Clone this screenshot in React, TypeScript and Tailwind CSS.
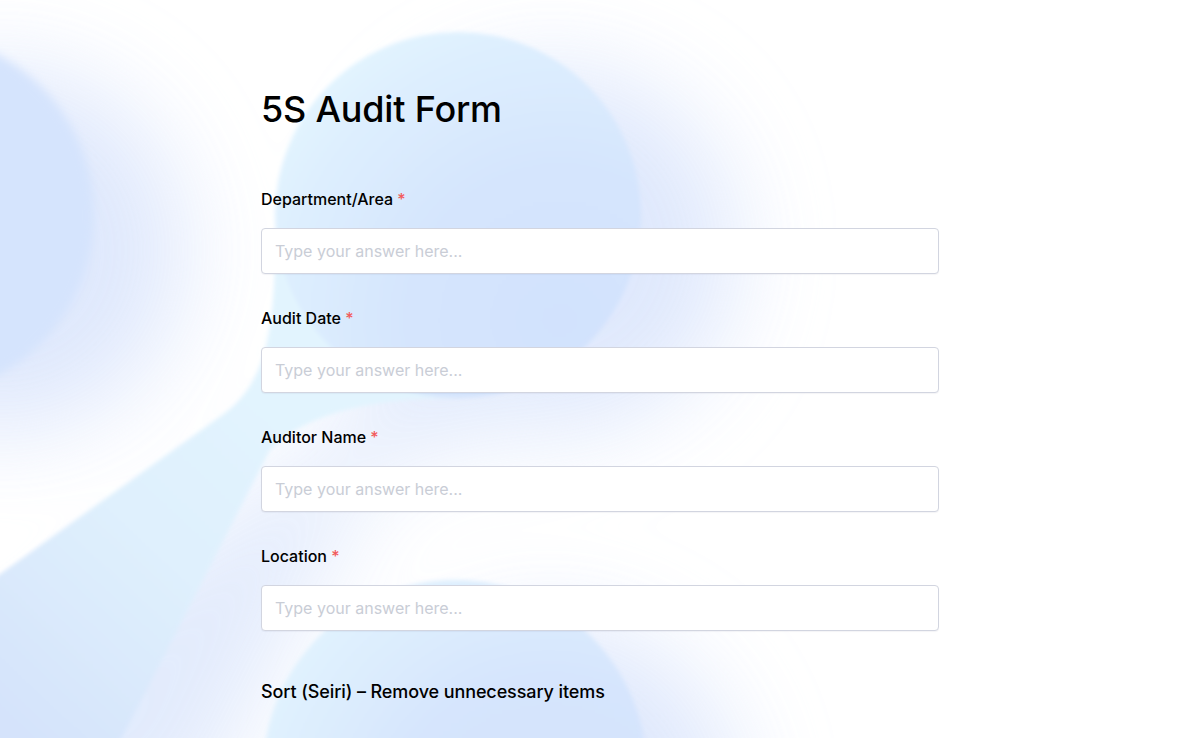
import React from "react";

const fields = ["Department/Area", "Audit Date", "Auditor Name", "Location"];

function Background() {
  return (
    <svg
      className="pointer-events-none absolute left-0 top-0 h-[738px] w-full"
      viewBox="0 0 1200 738"
      preserveAspectRatio="xMidYMin slice"
      aria-hidden="true"
    >
      <defs>
        <filter id="halo" x="-60%" y="-60%" width="220%" height="220%">
          <feGaussianBlur stdDeviation="48" />
        </filter>
        <filter id="soft" x="-20%" y="-20%" width="140%" height="140%">
          <feGaussianBlur stdDeviation="2" />
        </filter>
        <filter id="softer" x="-30%" y="-30%" width="160%" height="160%">
          <feGaussianBlur stdDeviation="5" />
        </filter>
        <radialGradient id="gB" gradientUnits="userSpaceOnUse" cx="560" cy="320" r="340">
          <stop offset="0" stopColor="#d2e2fd" />
          <stop offset="0.45" stopColor="#d5e5fd" />
          <stop offset="0.8" stopColor="#ddeefe" />
          <stop offset="1" stopColor="#e3f5fe" />
        </radialGradient>
        <radialGradient id="gC" gradientUnits="userSpaceOnUse" cx="550" cy="840" r="330">
          <stop offset="0" stopColor="#d2e1fc" />
          <stop offset="0.5" stopColor="#d6e5fd" />
          <stop offset="1" stopColor="#e2f4fe" />
        </radialGradient>
        <linearGradient id="gBand" gradientUnits="userSpaceOnUse" x1="290" y1="420" x2="10" y2="720">
          <stop offset="0" stopColor="#e2f4fe" />
          <stop offset="0.45" stopColor="#dff0fd" />
          <stop offset="1" stopColor="#d5e3fb" />
        </linearGradient>
      </defs>

      <rect x="0" y="0" width="1200" height="738" fill="#ffffff" />

      <g filter="url(#halo)" opacity="0.85" transform="translate(95 35)">
        <circle cx="-93" cy="215" r="183" fill="#d9e4fc" />
        <circle cx="458" cy="215" r="183" fill="#d9e4fc" />
        <circle cx="455" cy="775" r="190" fill="#d9e4fc" />
        <path
          d="M 275 230 C 276 340 262 385 225 413 L -120 660 L -120 800 L 90 800 L 270 450 C 310 410 380 398 458 398 L 458 215 Z"
          fill="#dde7fc"
        />
      </g>

      <circle cx="-88" cy="215" r="182" fill="#d5e4fd" filter="url(#softer)" />
      <circle cx="-70" cy="760" r="175" fill="#d6e4fb" filter="url(#softer)" />

      <g filter="url(#soft)">
        <path
          d="M 275 230 C 276 340 262 385 225 413 L -120 660 L -120 800 L 90 800 L 270 450 C 310 410 380 398 458 398 L 458 215 Z"
          fill="url(#gBand)"
        />
        <circle cx="458" cy="215" r="183" fill="url(#gB)" />
        <circle cx="455" cy="772" r="192" fill="url(#gC)" />
      </g>
    </svg>
  );
}

export default function App() {
  return (
    <div className="relative min-h-screen w-full overflow-hidden bg-white font-['Inter','Noto_Sans',sans-serif] text-black">
      <Background />
      <main className="relative mx-auto w-[678px] pb-24 pt-[89px]">
        <h1 className="text-[36px] font-medium leading-[40px] tracking-[-0.2px] text-black">
          5S Audit Form
        </h1>

        <div className="mt-[58px] flex flex-col">
          {fields.map((label) => (
            <div key={label} className="mb-8 flex flex-col">
              <label className="mb-[17px] text-base font-medium leading-6 text-black">
                {label} <span className="text-[#f25a5a]">*</span>
              </label>
              <input
                type="text"
                placeholder="Type your answer here..."
                className="h-[46px] w-full rounded-[4px] border border-[#d2d5e0] bg-white px-[13px] text-base text-gray-900 shadow-[0_1px_1px_rgba(30,40,80,0.05)] outline-none placeholder:text-[#c9cdd6]"
              />
            </div>
          ))}

          <h2 className="mt-[15px] text-lg font-medium leading-7 tracking-[-0.1px] text-black">
            Sort (Seiri) – Remove unnecessary items
          </h2>
        </div>
      </main>
    </div>
  );
}
